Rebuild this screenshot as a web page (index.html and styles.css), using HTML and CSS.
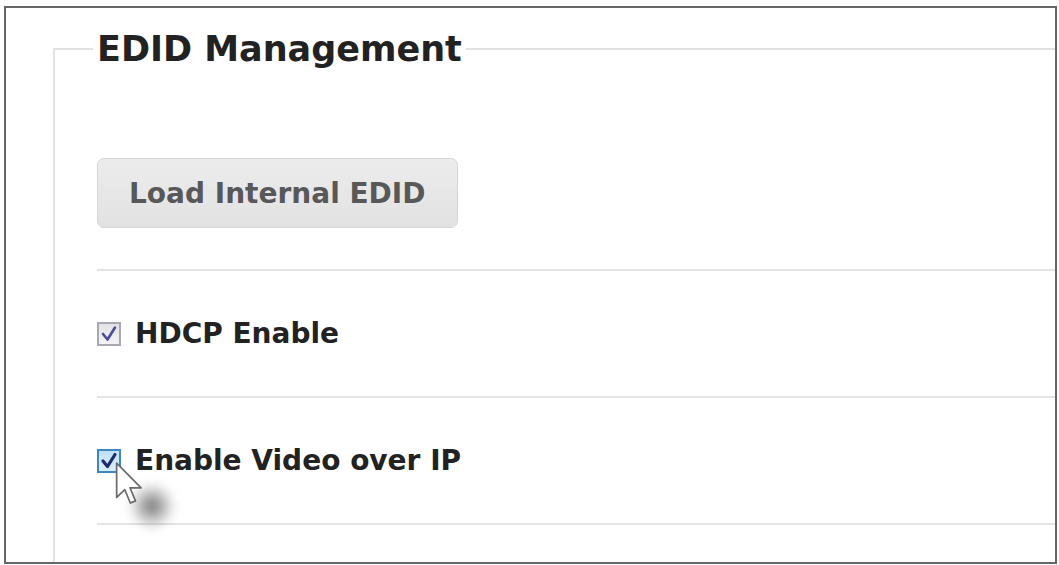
FILE: index.html
```html
<!DOCTYPE html>
<html lang="en">
<head>
  <meta charset="UTF-8">
  <title>EDID Management</title>
  <link rel="stylesheet" href="styles.css">
</head>
<body>

<div class="screen">
  <fieldset class="panel">
    <legend>EDID Management</legend>

    <div class="load-row">
      <button class="load-btn">Load Internal EDID</button>
    </div>

    <div class="option-row">
      <label class="check">
        <span class="box"><svg viewBox="0 0 20 20" width="20" height="20"><path d="M4 10 L8.5 15.5 L16 3.5" fill="none" stroke="#4b4c9c" stroke-width="2.6" stroke-linecap="round" stroke-linejoin="round"/></svg></span>
        HDCP Enable
      </label>
    </div>

    <div class="option-row">
      <label class="check">
        <span class="box active"><svg viewBox="0 0 20 20" width="20" height="20"><path d="M4 10 L8.5 15.5 L16 3.5" fill="none" stroke="#1c2a6e" stroke-width="3.2" stroke-linecap="round" stroke-linejoin="round"/></svg></span>
        Enable Video over IP
      </label>
    </div>

    <div class="option-row"></div>
  </fieldset>

  <!-- mouse pointer hovering the second checkbox -->
  <div class="click-spot"></div>
  <svg class="pointer" width="31" height="45" viewBox="0 0 14 21">
    <path d="M1 1 L1 17 L4.8 13.4 L7.4 19.6 L9.8 18.6 L7.2 12.5 L12.4 12.5 Z" fill="#fff" stroke="#6a6a6a" stroke-width="0.8" stroke-linejoin="round"/>
  </svg>
</div>

</body>
</html>
```

FILE: styles.css
```css
body {
  margin: 0;
  background: #fff;
  font-family: "DejaVu Sans", Verdana, sans-serif;
}

.screen {
  position: relative;
  box-sizing: border-box;
  height: 558px;
  margin: 6px 2px 0 4px;
  border: 2px solid #666;
  overflow: hidden;
  background: #fff;
}

.panel {
  margin: 21px -200px 0 47px;
  padding: 0 0 0 42px;
  border: 2px solid #e2e2e2;
  height: 700px;
}

.panel legend {
  margin-left: -4px;
  padding: 0 4px;
  font-size: 35px;
  font-weight: bold;
  color: #222;
}

.load-row {
  padding: 89px 0 41px;
}

.load-btn {
  width: 361px;
  height: 70px;
  padding: 0 0 0 31px;
  text-align: left;
  font-family: "DejaVu Sans", Verdana, sans-serif;
  font-size: 28px;
  font-weight: bold;
  color: #585858;
  background: linear-gradient(#ececec, #e2e2e2);
  border: 1px solid #d6d6d6;
  border-radius: 7px;
}

.option-row {
  display: flex;
  align-items: center;
  height: 125px;
  border-top: 2px solid #e4e4e4;
}

.check {
  display: flex;
  align-items: center;
  gap: 14px;
  font-size: 28px;
  font-weight: bold;
  color: #222;
}

.box {
  display: flex;
  align-items: center;
  justify-content: center;
  box-sizing: border-box;
  width: 24px;
  height: 24px;
  border: 2px solid #a8a8b0;
  background: linear-gradient(#e2e2e6, #f4f4f6);
}

.box.active {
  border-color: #3f86c8;
  background: linear-gradient(#bfe0f6, #dcefff);
}

.click-spot {
  position: absolute;
  left: 122px;
  top: 474px;
  width: 48px;
  height: 48px;
  border-radius: 50%;
  background: radial-gradient(circle, rgba(60,60,60,0.7), rgba(100,100,100,0.3) 45%, rgba(140,140,140,0) 72%);
  filter: blur(4px);
}

.pointer {
  position: absolute;
  left: 108px;
  top: 453px;
}
```
